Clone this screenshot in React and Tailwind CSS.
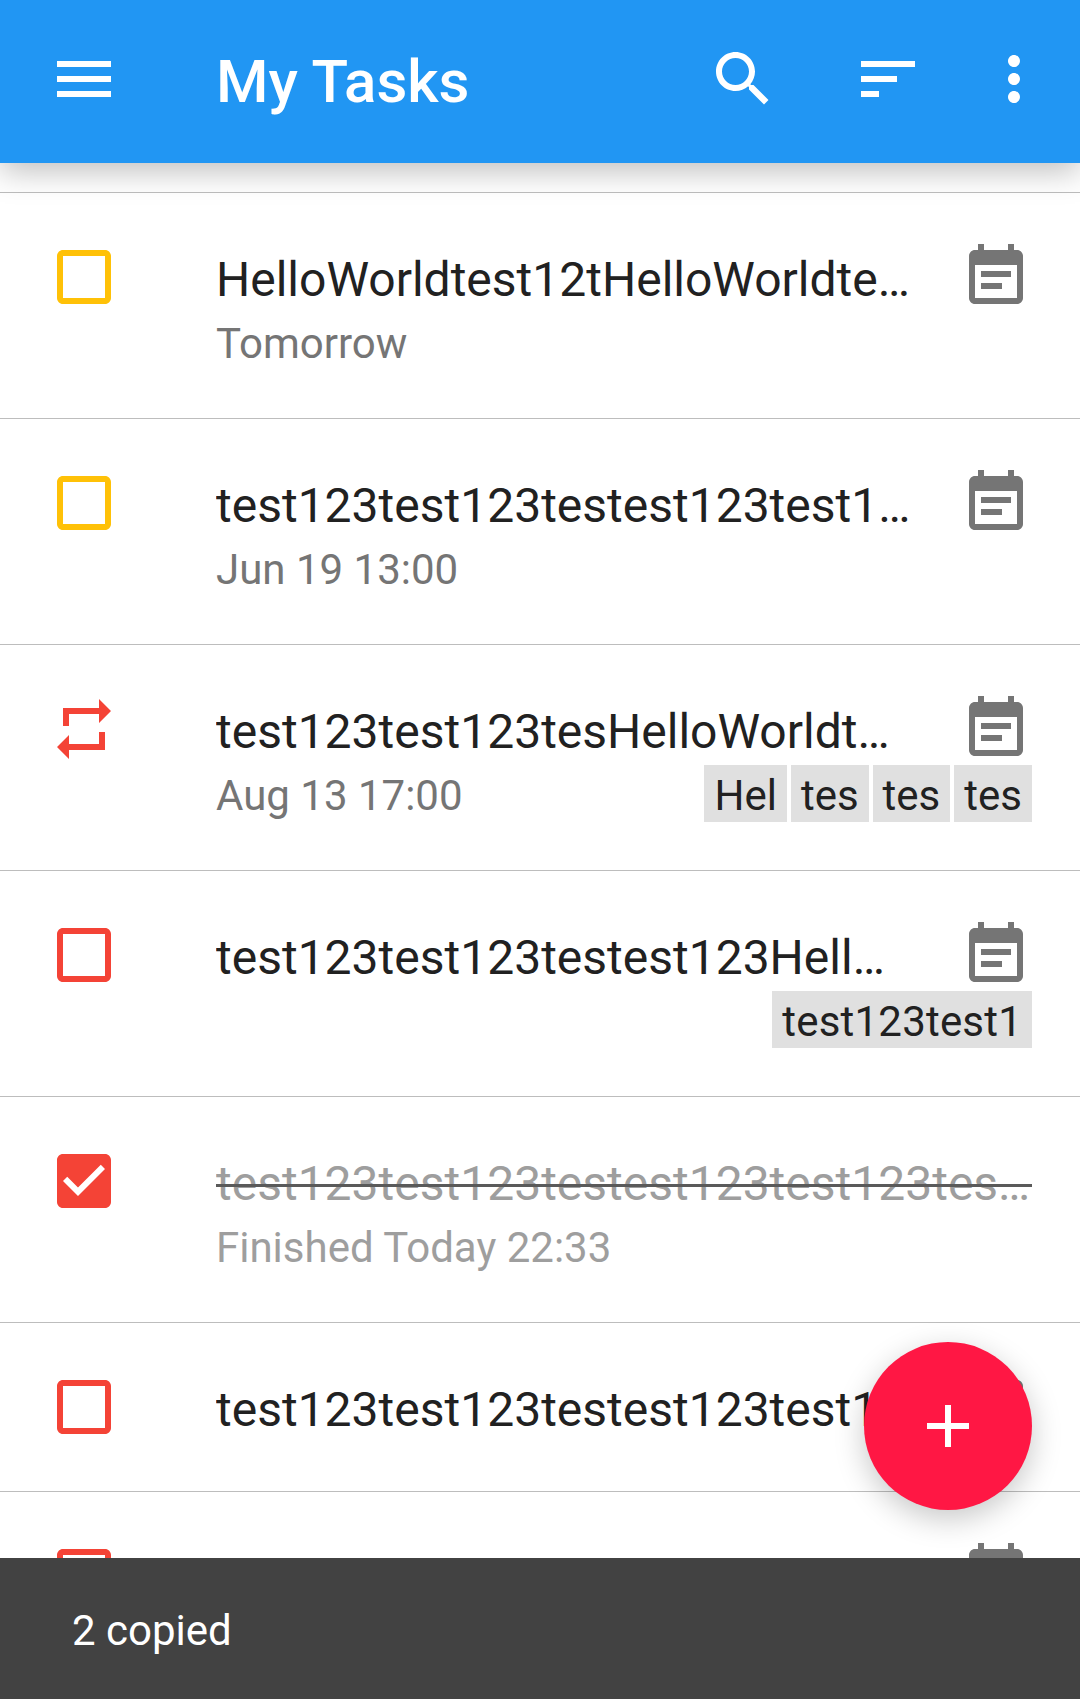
import React from 'react';

const ICONS = {
  menu: 'M3 18h18v-2H3v2zm0-5h18v-2H3v2zm0-7v2h18V6H3z',
  search: 'M15.5 14h-.79l-.28-.27C15.41 12.59 16 11.11 16 9.5 16 5.91 13.09 3 9.5 3S3 5.91 3 9.5 5.91 16 9.5 16c1.61 0 3.09-.59 4.23-1.57l.27.28v.79l5 4.99L20.49 19l-4.99-5zm-6 0C7.01 14 5 11.99 5 9.5S7.01 5 9.5 5 14 7.01 14 9.5 11.99 14 9.5 14z',
  sort: 'M3 18h6v-2H3v2zM3 6v2h18V6H3zm0 7h12v-2H3v2z',
  more: 'M12 8c1.1 0 2-.9 2-2s-.9-2-2-2-2 .9-2 2 .9 2 2 2zm0 2c-1.1 0-2 .9-2 2s.9 2 2 2 2-.9 2-2-.9-2-2-2zm0 6c-1.1 0-2 .9-2 2s.9 2 2 2 2-.9 2-2-.9-2-2-2z',
  note: 'M17 10H7v2h10v-2zm2-7h-1V1h-2v2H8V1H6v2H5c-1.11 0-1.99.9-1.99 2L3 19c0 1.1.89 2 2 2h14c1.1 0 2-.9 2-2V5c0-1.1-.9-2-2-2zm0 16H5V8h14v11zm-5-5H7v2h7v-2z',
  repeat: 'M7 7h10v3l4-4-4-4v3H5v6h2V7zm10 10H7v-3l-4 4 4 4v-3h12v-6h-2v4z',
  box: 'M19 5v14H5V5h14m0-2H5c-1.1 0-2 .9-2 2v14c0 1.1.9 2 2 2h14c1.1 0 2-.9 2-2V5c0-1.1-.9-2-2-2z',
  checked: 'M19 3H5c-1.11 0-2 .9-2 2v14c0 1.1.89 2 2 2h14c1.11 0 2-.9 2-2V5c0-1.1-.89-2-2-2zm-9 14l-5-5 1.41-1.41L10 14.17l7.59-7.59L19 8l-9 9z',
  add: 'M19 13h-6v6h-2v-6H5v-2h6V5h2v6h6v2z',
};

const Icon = ({ name, className }) => (
  <svg viewBox="0 0 24 24" className={`w-[72px] h-[72px] shrink-0 ${className}`} fill="currentColor">
    <path d={ICONS[name]} />
  </svg>
);

const TASKS = [
  { icon: 'box', color: 'text-[#FFC107]', title: 'HelloWorldtest12tHelloWorldtest12t', sub: 'Tomorrow' },
  { icon: 'box', color: 'text-[#FFC107]', title: 'test123test123testest123test123test123', sub: 'Jun 19 13:00' },
  { icon: 'repeat', color: 'text-[#F44336]', title: 'test123test123tesHelloWorldtest123', sub: 'Aug 13 17:00', chips: ['Hel', 'tes', 'tes', 'tes'] },
  { icon: 'box', color: 'text-[#F44336]', title: 'test123test123testest123HelloWorld', chips: ['test123test1'], chipClass: 'tracking-[0.2px]' },
  { icon: 'checked', color: 'text-[#F44336]', title: 'test123test123testest123test123test123test', sub: 'Finished Today 22:33', done: true },
  { icon: 'box', color: 'text-[#F44336]', title: 'test123test123testest123test123test123' },
  { icon: 'box', color: 'text-[#F44336]', title: 'test123test123testest123test123test123' },
];

const TaskRow = ({ task }) => (
  <div className="flex border-t border-[#BDBDBD] pl-[48px] pr-[48px] pt-[48px] pb-[48px]">
    <Icon name={task.icon} className={task.color} />
    <div className="flex-1 min-w-0 ml-[96px]">
      <div className="relative flex h-[72px]">
        <div
          className={`flex-1 min-w-0 truncate text-[48px] leading-[72px] pt-[3px] ${
            task.done ? 'text-[#9E9E9E]' : 'text-[#212121] mr-[49px]'
          }`}
        >
          {task.title}
        </div>
        {/* strike runs the full width, past the ellipsis */}
        {task.done && <div className="absolute left-0 right-0 top-[39px] h-[3px] bg-[#5A5A5A]" />}
        {!task.done && <Icon name="note" className="text-[#757575]" />}
      </div>
      {(task.sub || task.chips) && (
        <div className="flex justify-between items-start h-[57px]">
          <div className={`text-[42px] leading-[57px] pt-[2px] ${task.done ? 'text-[#9E9E9E]' : 'text-[#757575]'}`}>
            {task.sub}
          </div>
          {task.chips && (
            <div className="flex gap-[4px]">
              {task.chips.map((c, i) => (
                <span
                  key={i}
                  className={`bg-[#E0E0E0] h-[57px] px-[10px] pt-[2px] text-[42px] leading-[57px] text-[#212121] ${task.chipClass || ''}`}
                >
                  {c}
                </span>
              ))}
            </div>
          )}
        </div>
      )}
    </div>
  </div>
);

export default function App() {
  return (
    <div className="relative w-[1080px] h-[1699px] overflow-hidden bg-white font-['Roboto',sans-serif]">
      {/* Toolbar */}
      <div className="relative z-10 flex h-[163px] bg-[#2196F3] text-white pl-[48px] pr-[30px] pt-[43px] shadow-[0_8px_30px_rgba(0,0,0,0.26)]">
        <Icon name="menu" />
        <div className="flex-1 ml-[96px] pt-[3px] text-[60px] leading-[72px] font-medium">My Tasks</div>
        <div className="flex gap-[73px] h-[72px]">
          <Icon name="search" />
          <Icon name="sort" />
          <Icon name="more" className="-ml-[19px]" />
        </div>
      </div>

      {/* Task list */}
      <div className="mt-[29px]">
        {TASKS.map((t, i) => (
          <TaskRow key={i} task={t} />
        ))}
      </div>

      {/* FAB */}
      <div className="absolute z-20 right-[48px] bottom-[189px] w-[168px] h-[168px] rounded-full bg-[#FF1744] text-white flex items-center justify-center shadow-[0_9px_30px_rgba(0,0,0,0.22)]">
        <Icon name="add" />
      </div>

      {/* Snackbar */}
      <div className="absolute z-30 left-0 right-0 bottom-0 h-[141px] pt-[4px] bg-[#424242] text-white text-[42px] flex items-center pl-[72px]">
        2 copied
      </div>
    </div>
  );
}
